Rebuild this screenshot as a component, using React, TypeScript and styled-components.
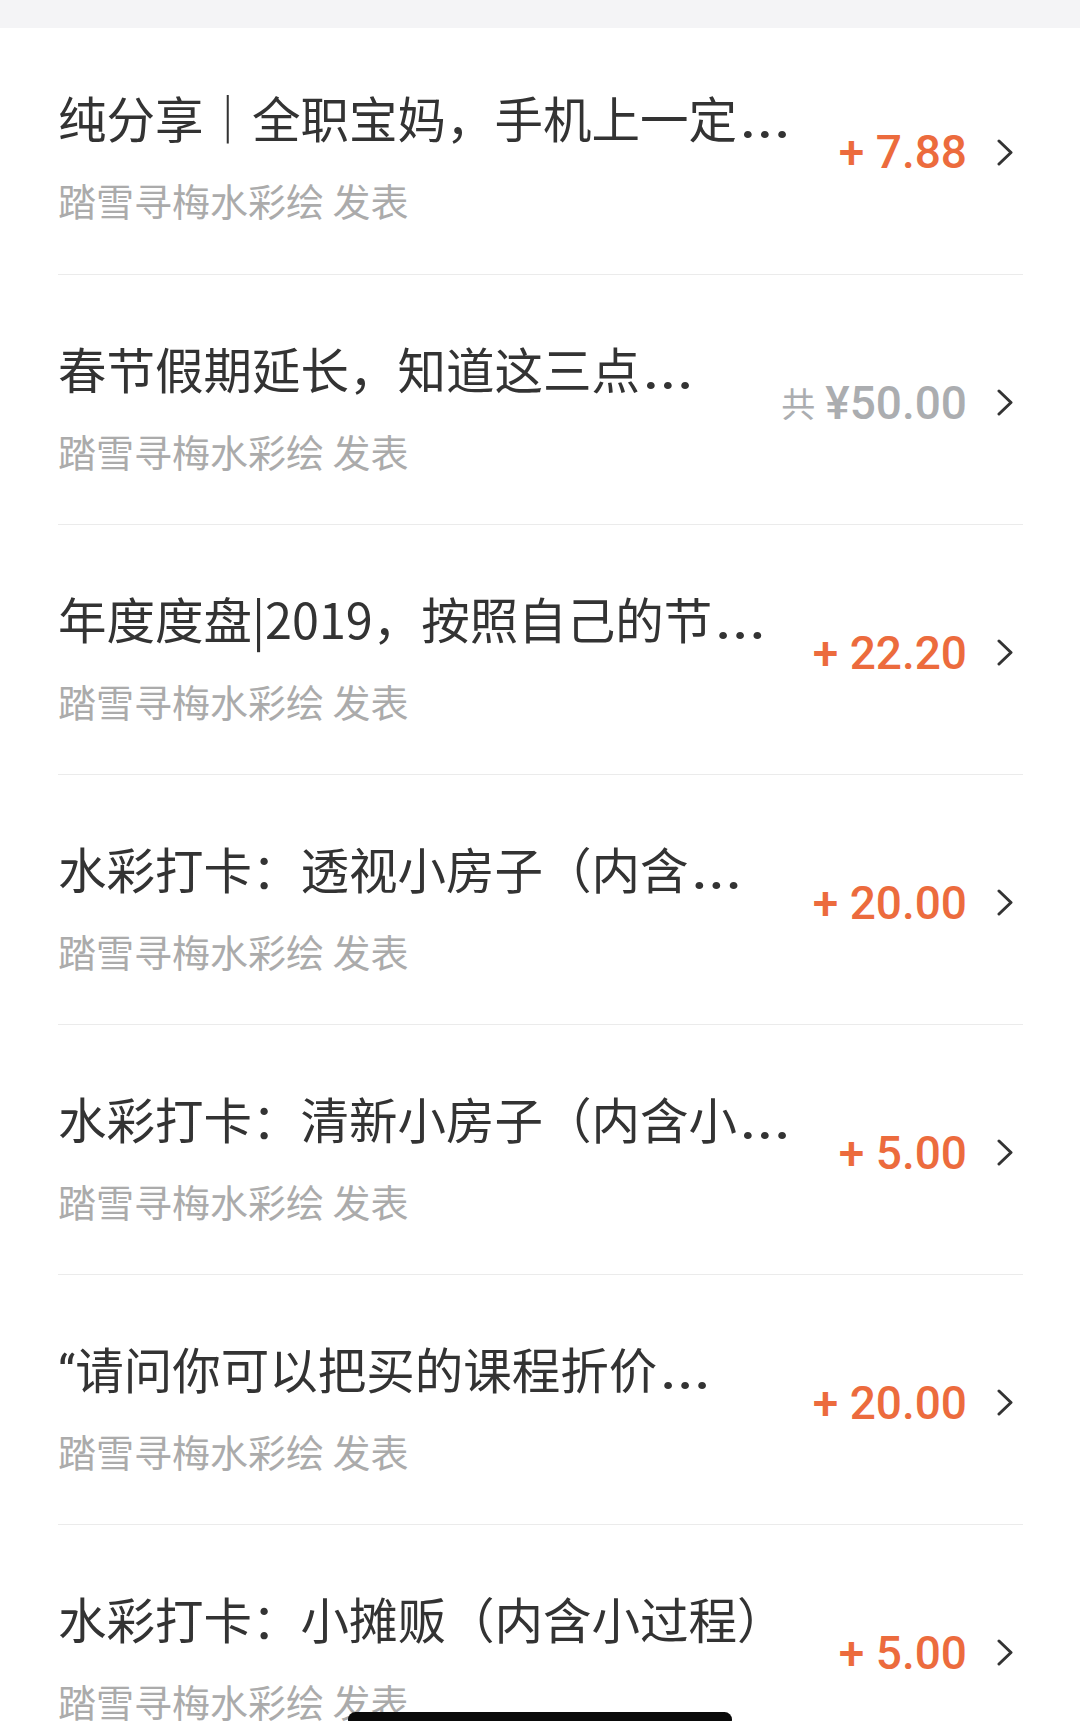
import React from 'react';
import styled, { createGlobalStyle } from 'styled-components';

const GlobalStyle = createGlobalStyle`
  html, body {
    margin: 0;
    padding: 0;
    background: #ffffff;
  }

  body {
    font-family: "Noto Sans CJK SC", "Noto Sans", sans-serif;
    -webkit-font-smoothing: antialiased;
  }
`;

const Screen = styled.div`
  position: relative;
  width: 1080px;
  height: 1721px;
  overflow: hidden;
  background: #ffffff;
`;

const TopBar = styled.div`
  height: 28px;
  background: #f4f4f6;
`;

const List = styled.div`
  display: flex;
  flex-direction: column;
`;

const Item = styled.div`
  padding: 0 57px 0 58px;
`;

const ItemInner = styled.div<{ $first?: boolean }>`
  display: flex;
  align-items: center;
  box-sizing: border-box;
  height: ${(p) => (p.$first ? '247px' : '250px')};
  padding-top: ${(p) => (p.$first ? '2px' : '6px')};
  border-bottom: 1px solid #ebebeb;
`;

const TextBlock = styled.div`
  align-self: flex-start;
  flex: 1;
  min-width: 0;
  padding-top: 57px;
`;

const Title = styled.div`
  height: 60px;
  font-size: 48.5px;
  line-height: 60px;
  color: #333333;
  white-space: nowrap;
`;

const Latin = styled.span`
  font-family: Roboto, "Liberation Sans", sans-serif;
  line-height: 0;
`;

const Dots = styled.span`
  font-family: Roboto, "Liberation Sans", sans-serif;
  font-weight: 700;
  line-height: 0;
  letter-spacing: 3px;
  margin-left: 4px;
`;

const Author = styled.div`
  margin-top: 30px;
  font-size: 38px;
  line-height: 46px;
  color: #ababab;
  white-space: nowrap;
`;

const Side = styled.div`
  display: flex;
  align-items: center;
  gap: 30px;
  padding-right: 10px;
`;

const Amount = styled.div<{ $muted?: boolean }>`
  font-family: Roboto, "Liberation Sans", sans-serif;
  font-size: 46px;
  font-weight: 500;
  line-height: 56px;
  color: ${(p) => (p.$muted ? '#abadb0' : '#ec6b3d')};
  white-space: nowrap;
`;

const Prefix = styled.span`
  font-family: "Noto Sans CJK SC", sans-serif;
  font-size: 34px;
  font-weight: 400;
  margin-right: 10px;
  vertical-align: 2px;
`;

const Chevron = styled.svg`
  display: block;
  width: 16px;
  height: 27px;
`;

const HomeIndicator = styled.div`
  position: absolute;
  left: 348px;
  bottom: -6px;
  width: 384px;
  height: 15px;
  border-radius: 8px;
  background: #0a0a0a;
`;

type Entry = {
  title: string;
  quoted?: boolean;
  cut?: boolean;
  amount: string;
  total?: boolean;
};

const entries: Entry[] = [
  { title: '纯分享｜全职宝妈，手机上一定', cut: true, amount: '+ 7.88' },
  { title: '春节假期延长，知道这三点', cut: true, amount: '¥50.00', total: true },
  { title: '年度度盘|2019，按照自己的节', cut: true, amount: '+ 22.20' },
  { title: '水彩打卡：透视小房子（内含', cut: true, amount: '+ 20.00' },
  { title: '水彩打卡：清新小房子（内含小', cut: true, amount: '+ 5.00' },
  { title: '请问你可以把买的课程折价', quoted: true, cut: true, amount: '+ 20.00' },
  { title: '水彩打卡：小摊贩（内含小过程）', amount: '+ 5.00' },
];

const ArrowRight = () => (
  <Chevron viewBox="0 0 16 27" fill="none">
    <polyline
      points="2,2 14,13.5 2,25"
      stroke="#333333"
      strokeWidth="3"
      strokeLinecap="round"
      strokeLinejoin="round"
    />
  </Chevron>
);

const App: React.FC = () => {
  return (
    <Screen>
      <GlobalStyle />
      <TopBar />
      <List>
        {entries.map((entry, i) => (
          <Item key={i}>
            <ItemInner $first={i === 0}>
              <TextBlock>
                <Title>
                  {entry.quoted && <Latin>“</Latin>}
                  {entry.title}
                  {entry.cut && <Dots>...</Dots>}
                </Title>
                <Author>踏雪寻梅水彩绘 发表</Author>
              </TextBlock>
              <Side>
                <Amount $muted={entry.total}>
                  {entry.total && <Prefix>共</Prefix>}
                  {entry.amount}
                </Amount>
                <ArrowRight />
              </Side>
            </ItemInner>
          </Item>
        ))}
      </List>
      <HomeIndicator />
    </Screen>
  );
};

export default App;
